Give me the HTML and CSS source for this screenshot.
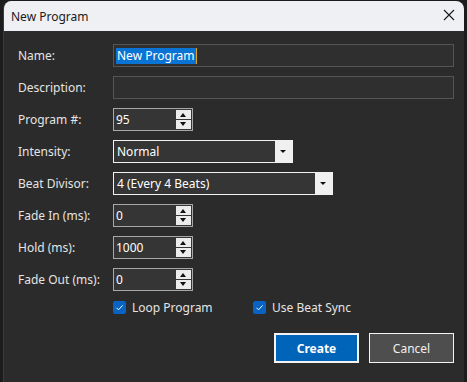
FILE: index.html
```html
<!DOCTYPE html>
<html lang="en">
<head>
  <meta charset="UTF-8">
  <title>New Program</title>
  <link rel="stylesheet" href="styles.css">
</head>
<body>
  <div class="ventana">
    <div class="titulo">
      <span>New Program</span>
      <svg class="cerrar" width="12" height="12" viewBox="0 0 12 12"><path d="M1 1L11 11M11 1L1 11" stroke="#1a1a1a" stroke-width="1.1"/></svg>
    </div>

    <div class="cuerpo">
      <div class="fila">
        <label>Name:</label>
        <div class="caja larga"><span class="sel">New Program</span><span class="cursor"></span></div>
      </div>
      <div class="fila">
        <label>Description:</label>
        <div class="caja larga"></div>
      </div>
      <div class="fila">
        <label>Program #:</label>
        <div class="caja num">95<span class="spin"><i class="up"></i><i class="down"></i></span></div>
      </div>
      <div class="fila">
        <label>Intensity:</label>
        <div class="combo c1">Normal<span class="flecha"></span></div>
      </div>
      <div class="fila">
        <label>Beat Divisor:</label>
        <div class="combo c2">4 (Every 4 Beats)<span class="flecha"></span></div>
      </div>
      <div class="fila">
        <label>Fade In (ms):</label>
        <div class="caja num">0<span class="spin"><i class="up"></i><i class="down"></i></span></div>
      </div>
      <div class="fila">
        <label>Hold (ms):</label>
        <div class="caja num">1000<span class="spin"><i class="up"></i><i class="down"></i></span></div>
      </div>
      <div class="fila">
        <label>Fade Out (ms):</label>
        <div class="caja num">0<span class="spin"><i class="up"></i><i class="down"></i></span></div>
      </div>

      <div class="checks">
        <div class="check"><span class="marca"><svg width="9" height="9" viewBox="0 0 9 9"><path d="M1.5 4.8L3.5 6.8L7.6 2.4" stroke="#fff" stroke-width="1" fill="none"/></svg></span>Loop Program</div>
        <div class="check"><span class="marca"><svg width="9" height="9" viewBox="0 0 9 9"><path d="M1.5 4.8L3.5 6.8L7.6 2.4" stroke="#fff" stroke-width="1" fill="none"/></svg></span>Use Beat Sync</div>
      </div>

      <div class="botones">
        <button class="crear">Create</button>
        <button class="cancelar">Cancel</button>
      </div>
    </div>
  </div>
</body>
</html>
```
FILE: styles.css
```css
body {
  margin: 0;
  background-color: #1c1c1c;
  font-family: "Noto Sans", sans-serif;
  font-size: 12px;
  color: #e4e4e4;
  height: 382px;
  overflow: hidden;
}

.ventana {
  margin: 1px 0 0 3px;
  width: 461px;
  height: 381px;
  background-color: #2b2b2b;
  border-radius: 8px 8px 0 0;
  border-left: 1px solid #3c3c3c;
  box-sizing: border-box;
  overflow: hidden;
}

.titulo {
  height: 30px;
  background-color: #eff0f4;
  color: #1a1a1a;
  display: flex;
  align-items: center;
  justify-content: space-between;
  padding: 0 9px 0 7px;
  font-size: 12px;
}

.cerrar {
  margin-top: -2px;
}

.cuerpo {
  padding: 13px 10px 0 14px;
}

.fila {
  display: flex;
  align-items: center;
  height: 23px;
  margin-bottom: 9px;
}

.fila label {
  width: 95px;
  flex: none;
}

.caja {
  height: 23px;
  box-sizing: border-box;
  border: 1px solid #7a7a7a;
  background-color: #2f2f2f;
  color: #fff;
  display: flex;
  align-items: center;
  padding-left: 2px;
  position: relative;
}

.larga {
  width: 360px;
  border-color: #555;
}

.sel {
  background-color: #0a74d4;
  color: #fff;
  line-height: 16px;
  padding: 0 1px;
}

.cursor {
  display: inline-block;
  width: 1px;
  height: 16px;
  background-color: #e0a020;
}

.num {
  width: 80px;
  background-color: #353535;
  border-color: #a8a8a8;
}

.spin {
  position: absolute;
  right: 1px;
  top: 1px;
  width: 15px;
  height: 19px;
  display: flex;
  flex-direction: column;
  gap: 1px;
}

.spin i {
  flex: 1;
  background-color: #ececec;
  position: relative;
}

.spin i::after {
  content: "";
  position: absolute;
  left: 4px;
  top: 3px;
  border-left: 3.5px solid transparent;
  border-right: 3.5px solid transparent;
}

.spin .up::after {
  border-bottom: 4px solid #111;
}

.spin .down::after {
  top: 2px;
  border-top: 4px solid #111;
}

.combo {
  height: 23px;
  box-sizing: border-box;
  border: 1px solid #f2f2f2;
  background-color: #353535;
  color: #fff;
  display: flex;
  align-items: center;
  padding-left: 3px;
  position: relative;
}

.c1 {
  width: 180px;
}

.c2 {
  width: 220px;
}

.flecha {
  position: absolute;
  right: 0;
  top: 0;
  bottom: 0;
  width: 17px;
  background-color: #f0f0f0;
}

.flecha::after {
  content: "";
  position: absolute;
  left: 5px;
  top: 9px;
  border-left: 3px solid transparent;
  border-right: 3px solid transparent;
  border-top: 3px solid #111;
}

.checks {
  display: flex;
  margin: 5px 0 0 95px;
  height: 14px;
  align-items: center;
}

.check {
  display: flex;
  align-items: center;
  width: 140px;
}

.marca {
  width: 13px;
  height: 13px;
  border-radius: 2px;
  background-color: #0863c4;
  display: flex;
  align-items: center;
  justify-content: center;
  margin-right: 6px;
}

.botones {
  display: flex;
  justify-content: flex-end;
  gap: 10px;
  margin-top: 19px;
}

button {
  width: 85px;
  height: 30px;
  font-family: "Noto Sans", sans-serif;
  font-size: 12px;
  border: 2px solid #f4f4f4;
  color: #f0f0f0;
  cursor: pointer;
}

.crear {
  background-color: #0064b8;
  font-weight: bold;
  color: #fff;
}

.cancelar {
  background-color: #4e4e4e;
  border-width: 1px;
}
```
